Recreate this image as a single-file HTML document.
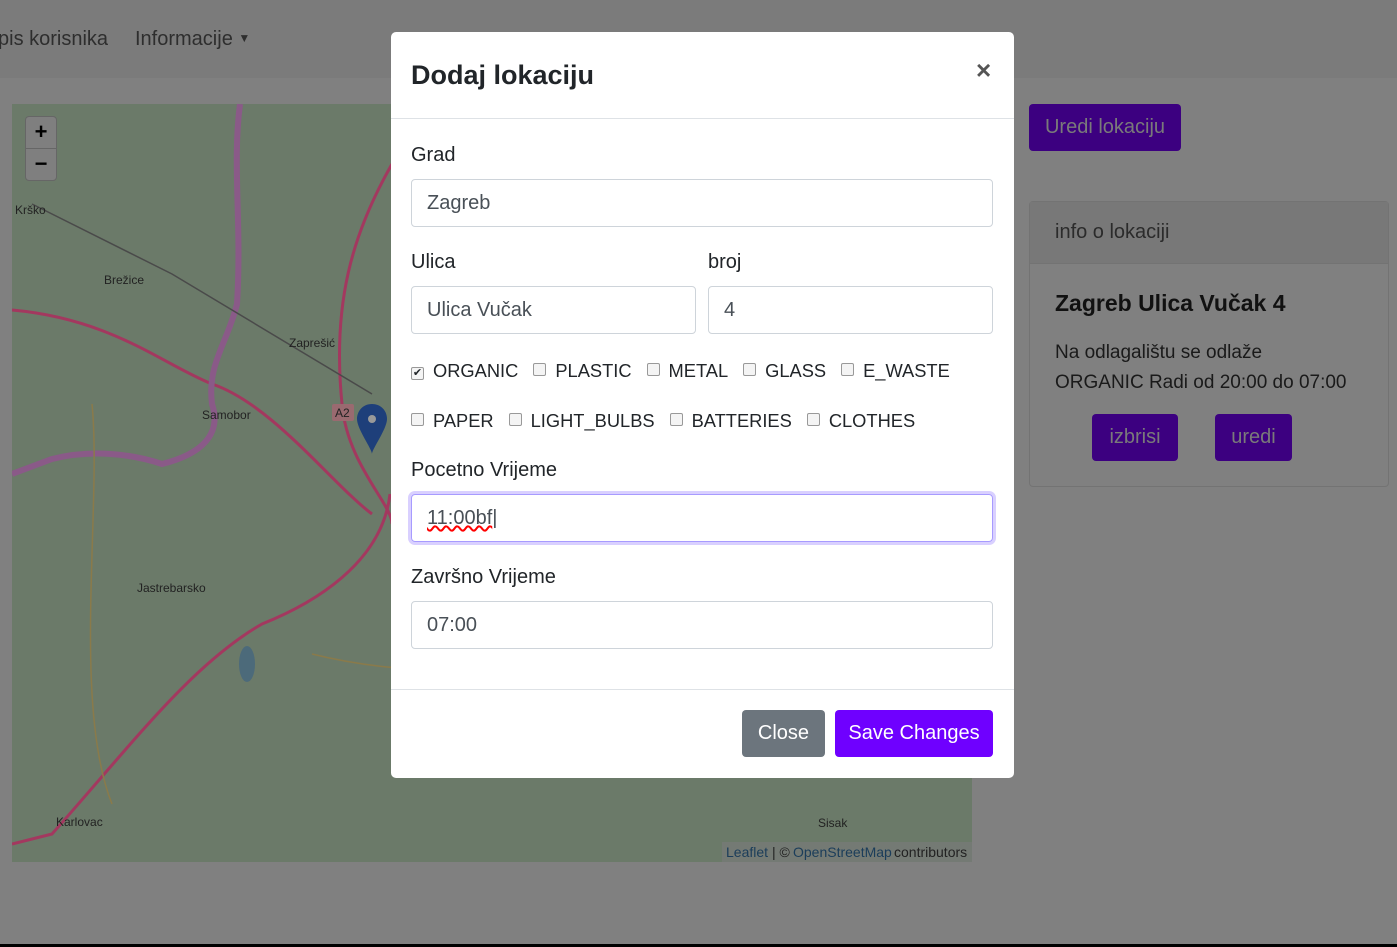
<!DOCTYPE html>
<html><head><style>
*{box-sizing:border-box}
body{margin:0;width:1397px;height:947px;background:#808080;font-family:"Liberation Sans",sans-serif;position:relative;overflow:hidden}
.nav{position:absolute;left:0;top:0;width:1397px;height:78px;background:#7b7b7b}
.nav span{position:absolute;top:28px;font-size:20px;color:#2e2e2e}
.map{position:absolute;left:12px;top:104px;width:960px;height:758px;background:#6b7a69;overflow:hidden}
.zoom{position:absolute;left:25px;top:116px;width:32px;height:65px;background:#7f7f7f;border-radius:4px;border:1px solid #666}
.zoom div{height:32px;text-align:center;font-size:22px;font-weight:bold;color:#000;line-height:30px}
.btn{position:absolute;color:#7a7a7a;font-size:20px;text-align:center;border-radius:4px}
.card{position:absolute;left:1029px;top:201px;width:360px;height:286px;border:1px solid #737373;border-radius:4px}
.modal{position:absolute;left:391px;top:32px;width:623px;height:746px;background:#fff;border-radius:5px}
.m{position:absolute;color:#212529;font-size:20px}
.inp{position:absolute;border:1px solid #ced4da;border-radius:4px;height:48px;font-size:20px;color:#495057;padding:12px 15px}
.cb{display:inline-block;width:13px;height:13px;border:1px solid #999;border-radius:2px;background:#f4f4f4;margin-right:9px;vertical-align:1px}
.row{position:absolute;left:411px;font-size:18.3px;color:#212529;white-space:nowrap}
.row span{margin-right:15px}
</style></head><body>
<div class="nav"><span style="left:-2px">pis korisnika</span><span style="left:135px">Informacije <span style="position:static;font-size:12px;vertical-align:3px">▼</span></span></div>
<div class="map">
<svg width="960" height="758">
<path d="M0 206 C100 215 150 260 200 280 C260 300 320 380 360 410" stroke="#a3385f" stroke-width="3" fill="none"/>
<path d="M228 0 C220 60 230 120 225 200 C215 240 195 260 200 300 C210 330 190 350 150 360 C120 350 80 345 40 355 L0 370" stroke="#8a5a88" stroke-width="6" fill="none"/>
<path d="M380 60 C340 130 320 200 330 300 C335 360 380 400 380 420" stroke="#a3385f" stroke-width="3" fill="none"/>
<path d="M378 390 C370 460 300 500 250 520 C180 560 120 640 40 730 L0 740" stroke="#a3385f" stroke-width="3" fill="none"/>
<path d="M20 100 L160 170 L360 290" stroke="#4a4a4a" stroke-width="1.5" fill="none"/>
<path d="M80 300 C90 400 60 600 100 700 M300 550 C500 600 700 520 940 560" stroke="#8a7a4a" stroke-width="1.5" fill="none"/>
<ellipse cx="235" cy="560" rx="8" ry="18" fill="#4c6a7a"/>
<text x="3" y="110" font-size="12" fill="#222">Krško</text>
<text x="92" y="180" font-size="12" fill="#222">Brežice</text>
<text x="277" y="243" font-size="12" fill="#222">Zaprešić</text>
<text x="190" y="315" font-size="12" fill="#222">Samobor</text>
<text x="125" y="488" font-size="12" fill="#222">Jastrebarsko</text>
<text x="44" y="722" font-size="12" fill="#222">Karlovac</text>
<text x="806" y="723" font-size="12" fill="#222">Sisak</text>
<rect x="320" y="300" width="22" height="17" rx="2" fill="#9a6a70"/><text x="323" y="313" font-size="12" fill="#222">A2</text>
<path d="M360 300 c-10 0 -15 8 -15 15 c0 10 15 30 15 35 c0 -5 15 -25 15 -35 c0 -7 -5 -15 -15 -15z" fill="#1e3f7a"/>
<circle cx="360" cy="315" r="4" fill="#999"/>
<rect x="710" y="738" width="250" height="20" fill="#747a74"/>
<text x="714" y="753" font-size="14" fill="#1b3d5a">Leaflet</text><text x="760" y="753" font-size="14" fill="#222">| © </text><text x="781" y="753" font-size="14" fill="#1b3d5a">OpenStreetMap</text><text x="882" y="753" font-size="14" fill="#222">contributors</text>
</svg></div>
<div class="zoom"><div style="border-bottom:1px solid #666">+</div><div>−</div></div>
<div class="btn" style="left:1029px;top:104px;width:152px;height:47px;background:#3c0080;line-height:47px;color:#7a7a7a">Uredi lokaciju</div>
<div class="card"><div style="height:62px;background:#787878;border-bottom:1px solid #737373;font-size:20px;color:#2b2b2b;padding:19px 25px">info o lokaciji</div>
<div style="position:absolute;left:25px;top:88px;font-size:23px;font-weight:bold;color:#111">Zagreb Ulica Vučak 4</div>
<div style="position:absolute;left:25px;top:136px;font-size:19px;color:#1a1a1a;line-height:30px">Na odlagalištu se odlaže<br>ORGANIC Radi od 20:00 do 07:00</div></div>
<div class="btn" style="left:1092px;top:414px;width:86px;height:47px;background:#3c0080;line-height:47px">izbrisi</div>
<div class="btn" style="left:1215px;top:414px;width:77px;height:47px;background:#3c0080;line-height:47px">uredi</div>
<div style="position:absolute;left:0;top:944px;width:1397px;height:3px;background:#000"></div>
<div class="modal">
<div style="height:87px;border-bottom:1px solid #dee2e6"></div>
<div style="position:absolute;left:0;top:657px;width:623px;border-top:1px solid #dee2e6"></div>
</div>
<div class="m" style="left:411px;top:60px;font-size:27px;font-weight:bold">Dodaj lokaciju</div>
<div class="m" style="left:976px;top:55px;font-size:26px;font-weight:bold;color:#555">×</div>
<div class="m" style="left:411px;top:144px">Grad</div>
<div class="inp" style="left:411px;top:179px;width:582px">Zagreb</div>
<div class="m" style="left:411px;top:251px">Ulica</div>
<div class="m" style="left:708px;top:251px">broj</div>
<div class="inp" style="left:411px;top:286px;width:285px">Ulica Vučak</div>
<div class="inp" style="left:708px;top:286px;width:285px">4</div>
<div class="row" style="top:360px"><span><i class="cb" style="font-style:normal;font-size:11px;line-height:11px;text-align:center">✔</i>ORGANIC</span><span><i class="cb"></i>PLASTIC</span><span><i class="cb"></i>METAL</span><span><i class="cb"></i>GLASS</span><span><i class="cb"></i>E_WASTE</span></div>
<div class="row" style="top:410px"><span><i class="cb"></i>PAPER</span><span><i class="cb"></i>LIGHT_BULBS</span><span><i class="cb"></i>BATTERIES</span><span><i class="cb"></i>CLOTHES</span></div>
<div class="m" style="left:411px;top:459px">Pocetno Vrijeme</div>
<div class="inp" style="left:411px;top:494px;width:582px;border-color:#a79bff;box-shadow:0 0 0 3px #d9d0ff"><span style="text-decoration:underline wavy red">11:00bf</span>|</div>
<div class="m" style="left:411px;top:566px">Završno Vrijeme</div>
<div class="inp" style="left:411px;top:601px;width:582px">07:00</div>
<div class="btn" style="left:742px;top:710px;width:83px;height:47px;background:#6c757d;color:#fff;line-height:47px">Close</div>
<div class="btn" style="left:835px;top:710px;width:158px;height:47px;background:#6f00ff;color:#fff;line-height:47px">Save Changes</div>
</body></html>
